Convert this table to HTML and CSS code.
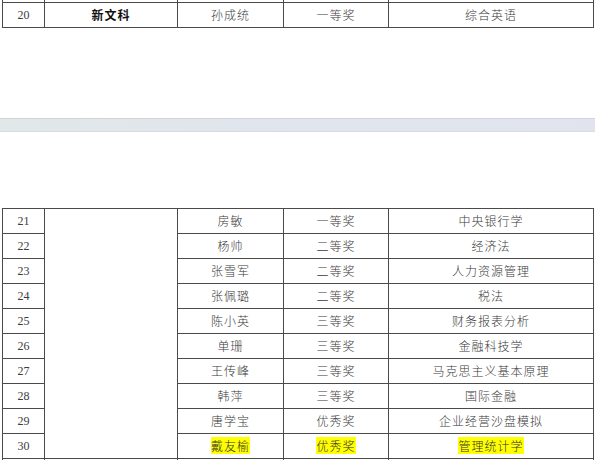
FILE: index.html
```html
<!DOCTYPE html>
<html lang="zh-CN">
<head>
<meta charset="utf-8">
<title>获奖名单</title>
<link rel="stylesheet" href="styles.css">
</head>
<body>
<div class="doc">
  <section class="page page-a">
    <table class="grid">
      <colgroup><col class="c1"><col class="c2"><col class="c3"><col class="c4"><col class="c5"></colgroup>
      <tr class="stub"><td></td><td></td><td></td><td></td><td></td></tr>
      <tr><td class="num">20</td><td class="bold">新文科</td><td>孙成统</td><td>一等奖</td><td>综合英语</td></tr>
    </table>
  </section>
  <div class="break"></div>
  <section class="page page-b">
    <table class="grid">
      <colgroup><col class="c1"><col class="c2"><col class="c3"><col class="c4"><col class="c5"></colgroup>
      <tr><td class="num">21</td><td rowspan="10"></td><td>房敏</td><td>一等奖</td><td>中央银行学</td></tr>
      <tr><td class="num">22</td><td>杨帅</td><td>二等奖</td><td>经济法</td></tr>
      <tr><td class="num">23</td><td>张雪军</td><td>二等奖</td><td>人力资源管理</td></tr>
      <tr><td class="num">24</td><td>张佩璐</td><td>二等奖</td><td>税法</td></tr>
      <tr><td class="num">25</td><td>陈小英</td><td>三等奖</td><td>财务报表分析</td></tr>
      <tr><td class="num">26</td><td>单珊</td><td>三等奖</td><td>金融科技学</td></tr>
      <tr><td class="num">27</td><td>王传峰</td><td>三等奖</td><td>马克思主义基本原理</td></tr>
      <tr><td class="num">28</td><td>韩萍</td><td>三等奖</td><td>国际金融</td></tr>
      <tr><td class="num">29</td><td>唐学宝</td><td>优秀奖</td><td>企业经营沙盘模拟</td></tr>
      <tr><td class="num">30</td><td><span class="hl">戴友榆</span></td><td><span class="hl">优秀奖</span></td><td><span class="hl">管理统计学</span></td></tr>
      <tr class="tail"><td class="num"></td><td class="top">新文科</td><td></td><td></td><td></td></tr>
    </table>
  </section>
</div>
</body>
</html>
```
FILE: styles.css
```css
html, body {
  margin: 0;
  padding: 0;
  background: #ffffff;
  overflow: hidden;
}
.doc {
  width: 595px;
  height: 460px;
  overflow: hidden;
}
.page {
  padding-left: 2px;
}
.page-a {
  margin-bottom: 90px;
}
.page-b {
  padding-top: 76px;
}
.break {
  height: 12px;
  border-top: 1px solid #d2d3d6;
  border-bottom: 1px solid #d8dbe2;
  background: linear-gradient(to right, #e1e8e8, #e0e5ee 50%, #e1e4ee);
}
.grid {
  border-collapse: collapse;
  table-layout: fixed;
  width: 591px;
  font-family: "Liberation Serif", "Noto Sans CJK SC", serif;
  font-size: 12px;
  color: #3a3a3a;
}
.c1 { width: 42px; }
.c2 { width: 133px; }
.c3 { width: 106px; }
.c4 { width: 105px; }
.c5 { width: 205px; }
.grid td {
  border: 1px solid #4a4a4a;
  height: 24px;
  padding: 0;
  text-align: center;
  vertical-align: middle;
  letter-spacing: 1px;
  line-height: 16px;
  font-family: "Noto Sans CJK SC", sans-serif;
  font-weight: 300;
}
.grid td.num {
  font-family: "Liberation Serif", serif;
  font-size: 12px;
  font-weight: 400;
  letter-spacing: 0;
  color: #3c3c3c;
}
.grid td.bold {
  font-weight: 700;
  color: #111;
}
.grid .stub td {
  border-top: none;
  height: 2px;
}
.grid .tail td {
  height: 24px;
}
.grid td.top {
  vertical-align: top;
  padding-top: 1px;
}
.hl {
  background: #ffff00;
  color: #333;
}
```
